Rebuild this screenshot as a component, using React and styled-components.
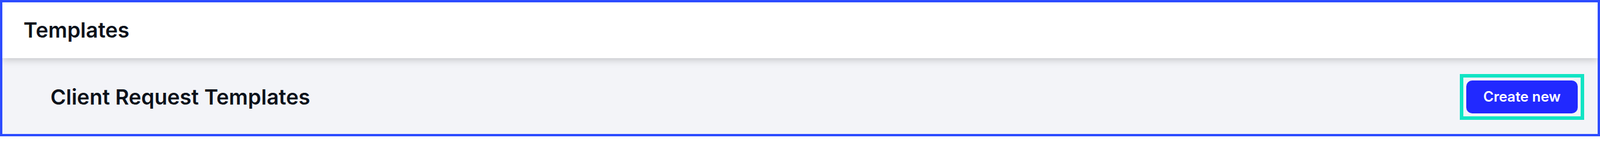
import styled, { createGlobalStyle } from 'styled-components';

const GlobalStyle = createGlobalStyle`
    html, body {
        margin: 0;
        padding: 0;
        background: #ffffff;
    }
    body {
        font-family: Inter, "Noto Sans", sans-serif;
        -webkit-font-smoothing: antialiased;
    }
`

export default function App () {
    return(
        <>
            <GlobalStyle />
            <Frame>
                <Header>
                    <HeaderTitle>Templates</HeaderTitle>
                </Header>
                <Section>
                    <SectionTitle>Client Request Templates</SectionTitle>
                    <FocusRing>
                        <CreateButton type="button">Create new</CreateButton>
                    </FocusRing>
                </Section>
            </Frame>
        </>
    )
}

const Frame = styled.div`
    box-sizing: border-box;
    width: 2728px;
    height: 232px;
    border: 4px solid #2d4cff;
    display: flex;
    flex-direction: column;
    background-color: #f3f4f8;
    overflow: hidden;
`
const Header = styled.header`
    flex: 0 0 95px;
    display: flex;
    align-items: center;
    padding: 0 36px;
    background-color: #ffffff;
    box-shadow: 0 3px 12px rgba(0, 0, 0, 0.2);
    position: relative;
    z-index: 1;
`
const HeaderTitle = styled.h1`
    margin: 0;
    margin-top: -2px;
    font-size: 36px;
    font-weight: 600;
    color: #0b111a;
`
const Section = styled.section`
    flex: 1;
    display: flex;
    align-items: center;
    justify-content: space-between;
    padding: 2px 23px 0 82px;
`
const SectionTitle = styled.h2`
    margin: 0;
    font-size: 36px;
    font-weight: 600;
    color: #0b111a;
`
const FocusRing = styled.div`
    display: flex;
    padding: 5px;
    border: 6px solid #12e4c4;
`
const CreateButton = styled.button`
    width: 190px;
    height: 56px;
    border: none;
    border-radius: 10px;
    background-color: #2129ff;
    color: #ffffff;
    font-family: Inter, "Noto Sans", sans-serif;
    font-size: 24px;
    font-weight: 600;
    cursor: pointer;
`
